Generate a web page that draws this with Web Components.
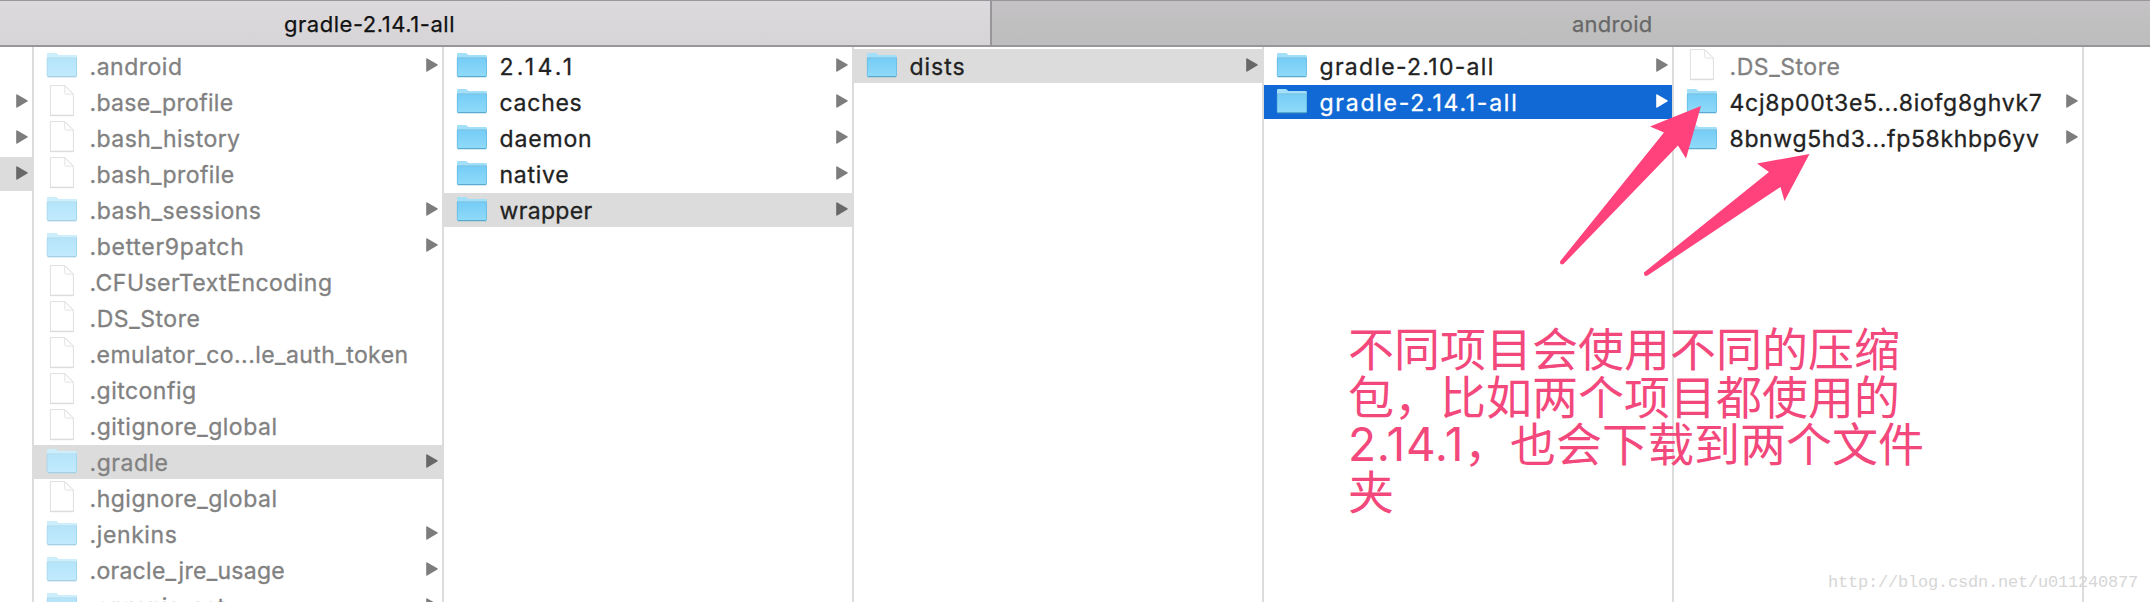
<!DOCTYPE html>
<html lang="zh"><head><meta charset="utf-8"><title>Finder</title>
<style>html,body{margin:0;height:602px;overflow:hidden;background:#fff}</style></head>
<body><finder-window></finder-window>
<script>
// Label that spreads its letters so the run fills the advance given in "w".
class FitText extends HTMLElement{
  connectedCallback(){
    const r=this.attachShadow({mode:'open'});
    r.innerHTML=`<style>:host{display:inline-block;white-space:nowrap;flex:none}span{display:inline-block}</style><span><slot></slot></span>`;
    const w=+this.getAttribute('w');if(!w)return;
    const s=r.querySelector('span'),n=[...this.textContent].length;
    const nat=s.getBoundingClientRect().width;
    s.style.letterSpacing=((w-nat)/n).toFixed(4)+'px';
  }
}
class FinderIcon extends HTMLElement{
  connectedCallback(){
    const r=this.attachShadow({mode:'open'});
    const folder=`<svg width="32" height="34" viewBox="0 0 32 34"><defs><linearGradient id="g" x1="0" y1="0" x2="0" y2="1"><stop offset="0" stop-color="#76cdf5"/><stop offset="1" stop-color="#8fdafa"/></linearGradient></defs>
<path d="M1 27.5V5.5Q1 4.3 2.2 4.3H9.3Q10.3 4.3 11 5L12.2 6.3H29.6Q30.8 6.3 30.8 7.5V27.5Q30.8 28.6 29.6 28.6H2.2Q1 28.6 1 27.5Z" fill="#5fa9c9" opacity=".35"/>
<path d="M1 27V5.3Q1 4 2.2 4H9.3Q10.3 4 11 4.8L12.3 6H29.6Q30.8 6 30.8 7.2V27Z" fill="#a3dff8"/>
<path d="M1 9.2H30.8V26.7Q30.8 27.8 29.6 27.8H2.2Q1 27.8 1 26.7Z" fill="url(#g)"/>
<path d="M1.2 8.9H30.6" stroke="#68b9dd" stroke-width=".8"/><path d="M1.8 27.6H30" stroke="#52a6cb" stroke-width="1"/>
<path d="M1.3 9V27M30.5 9V27" stroke="#63b8dc" stroke-width=".7"/>
<path class="veil" d="M1 27.5V5.3Q1 4 2.2 4H9.3Q10.3 4 11 4.8L12.3 6H29.6Q30.8 6 30.8 7.2V27.5Q30.8 28.6 29.6 28.6H2.2Q1 28.6 1 27.5Z" fill="#fff"/></svg>`;
    const file=`<svg width="32" height="34" viewBox="0 0 32 34"><path d="M4.4.6H19L27.4 9V30.2H4.4Z" fill="#fff" stroke="#dfdfdf" stroke-width="1"/><path d="M18.6.8V7.6Q18.6 9.2 20.2 9.2H27.3Z" fill="#fdfdfd" stroke="#e0e0e0" stroke-width=".8"/><path d="M4 30.7H27.8" stroke="#d4d4d4" stroke-width=".8"/></svg>`;
    r.innerHTML=`<style>:host{display:block;width:32px;height:34px;flex:none}.veil{opacity:0}:host([dim]) .veil{opacity:.46}svg{display:block}</style>`+(this.getAttribute('kind')==='file'?file:folder);
  }
}
class FinderRow extends HTMLElement{
  connectedCallback(){
    const r=this.attachShadow({mode:'open'}),k=this.getAttribute('kind'),dim=this.hasAttribute('dim');
    r.innerHTML=`<style>
:host{display:flex;box-sizing:border-box;height:34px;margin-bottom:2px;padding-left:12px;color:#222;align-items:flex-start}
:host([dim]){color:#818181}:host([sel]){background:#dcdcdc}:host([active]){background:#1169d5;color:#fff}
.t{flex:1;padding:1px 0 0 11.5px;line-height:35px;height:33px;white-space:nowrap}
.a{flex:none;width:12px;height:14px;margin:9px 4px 0 0;fill:#7d7d7d}
:host([sel]) .a{fill:#686868}:host([active]) .a{fill:#fff}
</style>${k?`<finder-icon kind="${k}" ${dim&&k==='folder'?'dim':''}></finder-icon>`:''}<div class="t">${k?`<fit-text w="${this.getAttribute('w')}">${this.textContent}</fit-text>`:''}</div>${this.hasAttribute('arrow')?'<svg class="a" viewBox="0 0 12 14"><path d="M.2 1Q.2-.2 1.3.4L11.3 6.2Q12.2 6.9 11.3 7.6L1.3 13.6Q.2 14.2.2 13Z"/></svg>':''}`;
  }
}
class FinderColumn extends HTMLElement{
  connectedCallback(){
    this.attachShadow({mode:'open'}).innerHTML=`<style>:host{display:block;box-sizing:border-box;width:410px;flex:none;border-right:2px solid #dcdcdc;padding-top:2px;overflow:hidden;font:400 23px Inter,"Liberation Sans",sans-serif;-webkit-text-stroke:.3px}</style><slot></slot>`;
  }
}
class FinderTabs extends HTMLElement{
  connectedCallback(){
    this.attachShadow({mode:'open'}).innerHTML=`<style>
:host{display:flex;box-sizing:border-box;height:47px;border-top:1px solid #98969a;border-bottom:2px solid #98969a;font:400 22px Inter,"Liberation Sans",sans-serif;-webkit-text-stroke:.25px}
div{box-sizing:border-box;line-height:46px;height:44px}
.on{width:992px;background:linear-gradient(#dcdadd,#d6d4d7);border-right:2px solid #98969a;color:#111;padding-left:284px}
.off{flex:1;background:linear-gradient(#c4c2c4,#bdbdbd);color:#686868;padding-left:580px}
</style><div class="on"><fit-text w="171">gradle-2.14.1-all</fit-text></div><div class="off"><fit-text w="80.5">android</fit-text></div>`;
  }
}
class NoteOverlay extends HTMLElement{
  connectedCallback(){
    this.attachShadow({mode:'open'}).innerHTML=`<style>
:host{display:block;position:absolute;inset:0;pointer-events:none}
svg{position:absolute;left:0;top:0}
.n{position:absolute;left:1348px;top:326px;color:#f2487c;font:400 46px Inter,"Noto Sans CJK SC",sans-serif}
.n div{height:47.5px;line-height:47.5px;white-space:nowrap}
.w{position:absolute;left:1828px;top:573px;color:#d6d6d6;font:17px/20px "Liberation Mono",monospace}
</style>
<svg width="2150" height="602" viewBox="0 0 2150 602" fill="#ff427b"><path d="M1701 106L1650 126.500L1664 132.500L1560 261.500Q1560 265.500 1563.500 264L1678 145.500L1686 158.500Z"/><path d="M1809.500 154L1757 163.500L1769 172L1644 272.500Q1643.500 277 1647.500 275.500L1780.500 187L1784.500 201Z"/></svg>
<div class="n"><div><fit-text w="552">不同项目会使用不同的压缩</fit-text></div><div><fit-text w="552">包，比如两个项目都使用的</fit-text></div><div><fit-text w="116">2.14.1</fit-text><fit-text w="460">，也会下载到两个文件</fit-text></div><div><fit-text w="46">夹</fit-text></div></div>
<div class="w"><fit-text w="310">http://blog.csdn.net/u011240877</fit-text></div>`;
  }
}
class FinderWindow extends HTMLElement{
  connectedCallback(){
    const row=([t,w,k,f=''])=>`<finder-row w="${w}" kind="${k}" ${f}>${t}</finder-row>`;
    const D='folder',F='file';
    const cols=[
     [['.android',93,D,'dim arrow'],['.base_profile',144,F,'dim'],['.bash_history',151,F,'dim'],['.bash_profile',145,F,'dim'],['.bash_sessions',172,D,'dim arrow'],['.better9patch',155,D,'dim arrow'],['.CFUserTextEncoding',243,F,'dim'],['.DS_Store',111,F,'dim'],['.emulator_co...le_auth_token',319,F,'dim'],['.gitconfig',107,F,'dim'],['.gitignore_global',188,F,'dim'],['.gradle',79,D,'dim sel arrow'],['.hgignore_global',188,F,'dim'],['.jenkins',88,D,'dim arrow'],['.oracle_jre_usage',195.5,D,'dim arrow'],['.organis_ast',136,D,'dim arrow']],
     [['2.14.1',76,D,'arrow'],['caches',83,D,'arrow'],['daemon',93,D,'arrow'],['native',70,D,'arrow'],['wrapper',93,D,'sel arrow']],
     [['dists',56,D,'sel arrow']],
     [['gradle-2.10-all',175,D,'arrow'],['gradle-2.14.1-all',199,D,'active arrow']],
     [['.DS_Store',111,F,'dim'],['4cj8p00t3e5...8iofg8ghvk7',313,D,'arrow'],['8bnwg5hd3...fp58khbp6yv',310,D,'arrow']]];
    this.attachShadow({mode:'open'}).innerHTML=`<style>:host{display:flex;flex-direction:column;position:relative;width:2150px;height:602px;overflow:hidden;background:#fff}
main{display:flex;flex:1;min-height:0}.first{width:34px}.first finder-row{padding-left:0}</style>
<finder-tabs></finder-tabs><main><finder-column class="first"><finder-row></finder-row><finder-row arrow></finder-row><finder-row arrow></finder-row><finder-row sel arrow></finder-row></finder-column>${cols.map(c=>`<finder-column>${c.map(row).join('')}</finder-column>`).join('')}</main><note-overlay></note-overlay>`;
  }
}
customElements.define('fit-text',FitText);
customElements.define('finder-icon',FinderIcon);
customElements.define('finder-row',FinderRow);
customElements.define('finder-column',FinderColumn);
customElements.define('finder-tabs',FinderTabs);
customElements.define('note-overlay',NoteOverlay);
customElements.define('finder-window',FinderWindow);
</script></body></html>
